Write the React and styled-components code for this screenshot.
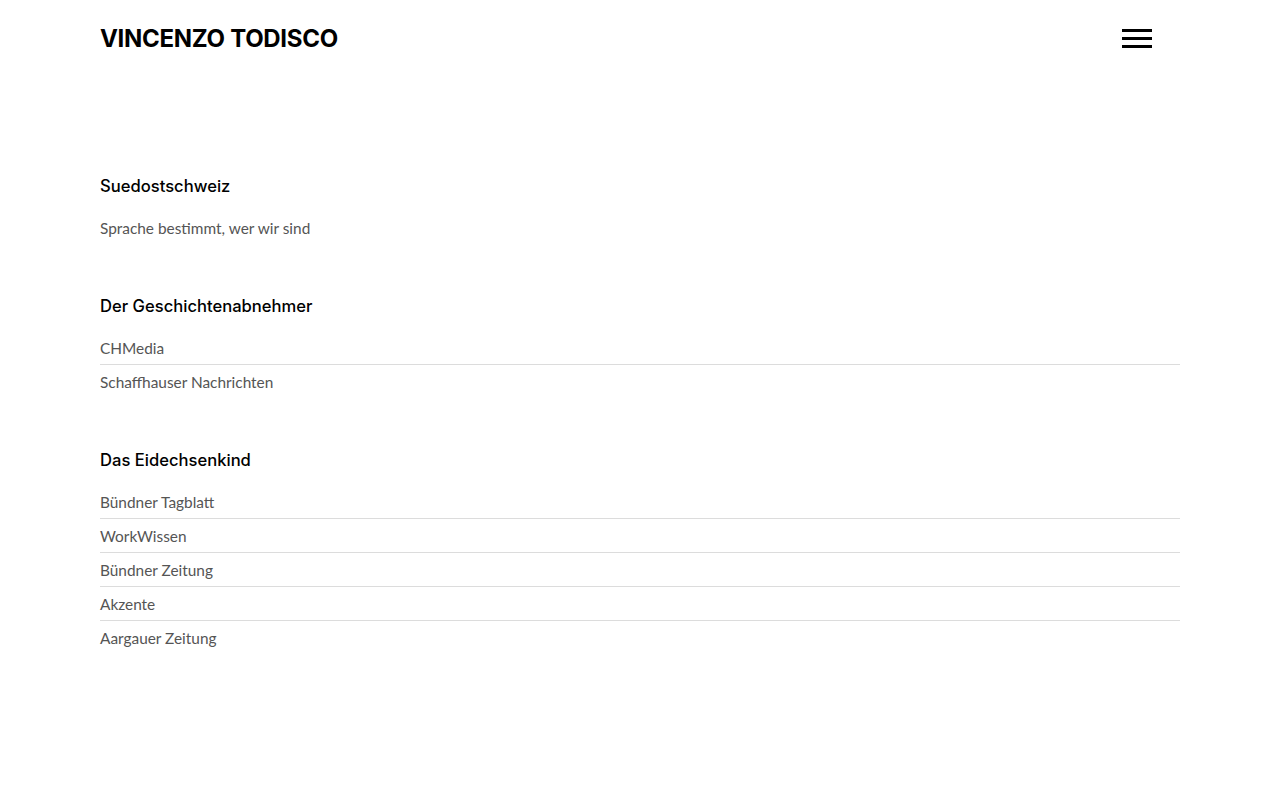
import React from "react";
import styled, { createGlobalStyle } from "styled-components";

const Global = createGlobalStyle`
  html, body { margin: 0; padding: 0; background: #fff; }
  body { font-family: "Lato", "Liberation Sans", sans-serif; }
`;

const Page = styled.div`
  width: 1080px;
  margin: 0 100px;
`;

const Header = styled.header`
  display: flex;
  align-items: center;
  justify-content: space-between;
  height: 76px;
`;

const Logo = styled.div`
  font-family: "Inter", "Liberation Sans", sans-serif;
  font-weight: 700;
  font-size: 24px;
  letter-spacing: -0.3px;
  color: #000;
`;

const Burger = styled.button`
  display: flex;
  flex-direction: column;
  gap: 5px;
  width: 30px;
  padding: 0;
  margin-right: 28px;
  border: 0;
  background: none;
  span { display: block; height: 3px; background: #000; }
`;

const Main = styled.main`
  display: flex;
  flex-direction: column;
  gap: 49px;
  padding-top: 98px;
`;

const Section = styled.section`
  display: flex;
  flex-direction: column;
  gap: 13px;
`;

const Heading = styled.h2`
  margin: 0;
  font-family: "Inter", "Liberation Sans", sans-serif;
  font-weight: 500;
  font-size: 16.6px;
  line-height: 24px;
  color: #000;
`;

const List = styled.ul`
  list-style: none;
  margin: 0;
  padding: 0;
`;

const Row = styled.li`
  height: 33px;
  display: flex;
  align-items: center;
  font-size: 15.4px;
  color: #555;
  border-bottom: 1px solid ${(p) => (p.$last ? "transparent" : "#dcdcdc")};
`;

const sections = [
  { title: "Suedostschweiz", items: ["Sprache bestimmt, wer wir sind"] },
  { title: "Der Geschichtenabnehmer", items: ["CHMedia", "Schaffhauser Nachrichten"] },
  {
    title: "Das Eidechsenkind",
    items: ["Bündner Tagblatt", "WorkWissen", "Bündner Zeitung", "Akzente", "Aargauer Zeitung"],
  },
];

export default function App() {
  return (
    <>
      <Global />
      <Page>
        <Header>
          <Logo>VINCENZO TODISCO</Logo>
          <Burger aria-label="Menu">
            <span />
            <span />
            <span />
          </Burger>
        </Header>
        <Main>
          {sections.map((s) => (
            <Section key={s.title}>
              <Heading>{s.title}</Heading>
              <List>
                {s.items.map((it, i) => (
                  <Row key={it} $last={i === s.items.length - 1}>{it}</Row>
                ))}
              </List>
            </Section>
          ))}
        </Main>
      </Page>
    </>
  );
}
